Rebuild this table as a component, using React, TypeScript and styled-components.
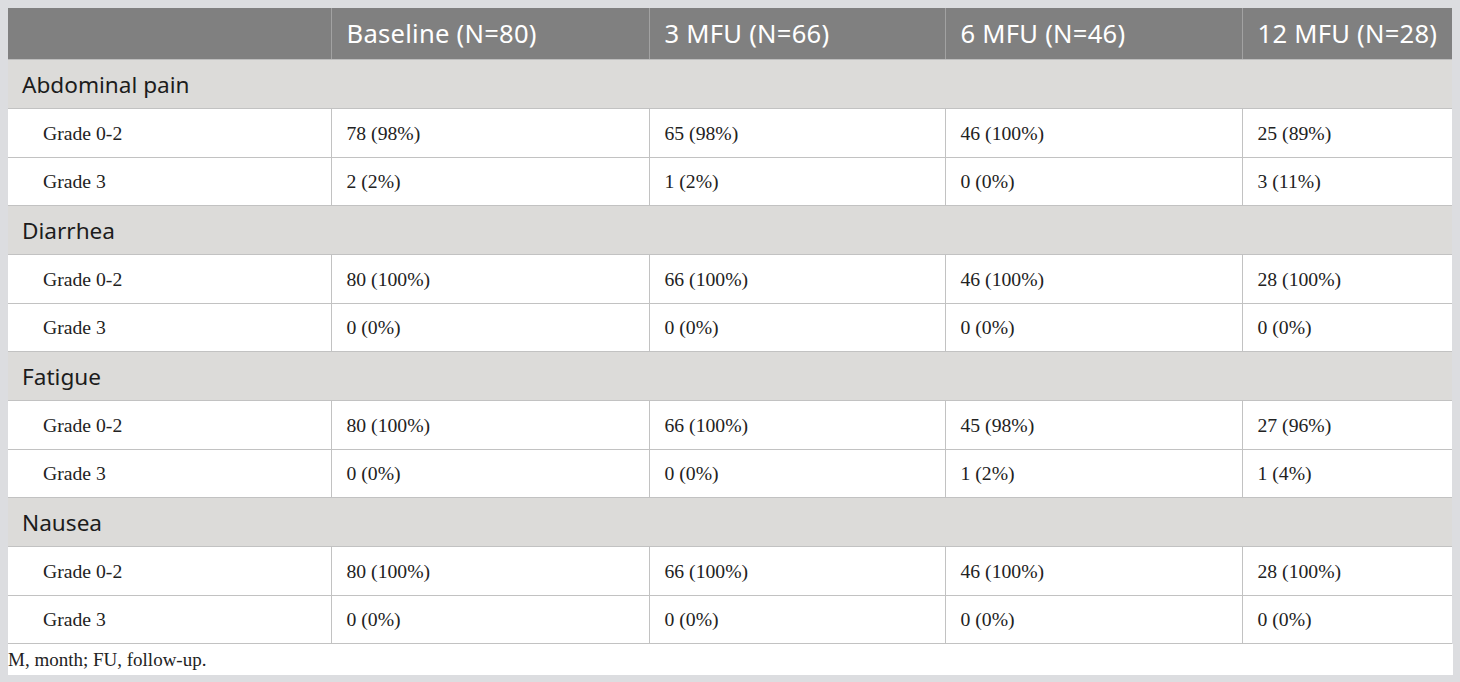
import React from "react";
import styled, { createGlobalStyle } from "styled-components";

const Global = createGlobalStyle`
  html, body { margin: 0; padding: 0; }
  body {
    background: #dcdde0;
    padding: 8px;
    width: 1444px;
    box-sizing: content-box;
  }
`;

const Wrap = styled.div`
  display: flex;
  flex-direction: column;
  width: 1444px;
`;

const Table = styled.table`
  border-collapse: collapse;
  table-layout: fixed;
  width: 1444px;
  background: #ffffff;
`;

const HeadCell = styled.th`
  background: #808080;
  color: #ffffff;
  font-family: "Noto Sans", "Open Sans", sans-serif;
  font-weight: 400;
  font-size: 25.6px;
  letter-spacing: 0.25px;
  text-align: left;
  height: 51px;
  padding: 0 0 0 15px;
  border-left: 1px solid #a2a2a2;
  border-bottom: 1px solid #bdbdbd;
  white-space: nowrap;
  &:first-child { border-left: none; }
`;

const GroupCell = styled.td`
  background: #dcdbd9;
  color: #1c1c1c;
  font-family: "Noto Sans", "Open Sans", sans-serif;
  font-size: 22.6px;
  height: 48px;
  padding: 0 0 0 14px;
  border-bottom: 1px solid #c2c2c2;
`;

const DataCell = styled.td<{ $indent?: boolean; $h: number }>`
  font-family: "Liberation Serif", "Times New Roman", serif;
  font-size: 19.7px;
  color: #222222;
  height: ${(p) => p.$h}px;
  padding: 0 0 0 ${(p) => (p.$indent ? "35px" : "15px")};
  border-bottom: 1px solid #c2c2c2;
  border-left: 1px solid #c2c2c2;
  white-space: nowrap;
  &:first-child { border-left: none; }
`;

const Footer = styled.div`
  background: #ffffff;
  font-family: "Liberation Serif", "Times New Roman", serif;
  font-size: 19px;
  color: #222222;
  height: 31px;
  line-height: 31px;
  width: 1445px;
`;

const cols = [323, 318, 296, 297, 210];
const headers = ["", "Baseline (N=80)", "3 MFU (N=66)", "6 MFU (N=46)", "12 MFU (N=28)"];

type Group = { name: string; rows: { label: string; values: string[] }[] };

const groups: Group[] = [
  {
    name: "Abdominal pain",
    rows: [
      { label: "Grade 0-2", values: ["78 (98%)", "65 (98%)", "46 (100%)", "25 (89%)"] },
      { label: "Grade 3", values: ["2 (2%)", "1 (2%)", "0 (0%)", "3 (11%)"] },
    ],
  },
  {
    name: "Diarrhea",
    rows: [
      { label: "Grade 0-2", values: ["80 (100%)", "66 (100%)", "46 (100%)", "28 (100%)"] },
      { label: "Grade 3", values: ["0 (0%)", "0 (0%)", "0 (0%)", "0 (0%)"] },
    ],
  },
  {
    name: "Fatigue",
    rows: [
      { label: "Grade 0-2", values: ["80 (100%)", "66 (100%)", "45 (98%)", "27 (96%)"] },
      { label: "Grade 3", values: ["0 (0%)", "0 (0%)", "1 (2%)", "1 (4%)"] },
    ],
  },
  {
    name: "Nausea",
    rows: [
      { label: "Grade 0-2", values: ["80 (100%)", "66 (100%)", "46 (100%)", "28 (100%)"] },
      { label: "Grade 3", values: ["0 (0%)", "0 (0%)", "0 (0%)", "0 (0%)"] },
    ],
  },
];

export default function App() {
  return (
    <>
      <Global />
      <Wrap>
        <Table>
          <colgroup>
            {cols.map((w, i) => (
              <col key={i} style={{ width: w }} />
            ))}
          </colgroup>
          <thead>
            <tr>
              {headers.map((h, i) => (
                <HeadCell key={i}>{h}</HeadCell>
              ))}
            </tr>
          </thead>
          <tbody>
            {groups.map((g) => (
              <React.Fragment key={g.name}>
                <tr>
                  <GroupCell colSpan={5}>{g.name}</GroupCell>
                </tr>
                {g.rows.map((r, ri) => (
                  <tr key={r.label}>
                    <DataCell $indent $h={ri === 0 ? 48 : 47}>
                      {r.label}
                    </DataCell>
                    {r.values.map((v, i) => (
                      <DataCell key={i} $h={ri === 0 ? 48 : 47}>
                        {v}
                      </DataCell>
                    ))}
                  </tr>
                ))}
              </React.Fragment>
            ))}
          </tbody>
        </Table>
        <Footer>M, month; FU, follow-up.</Footer>
      </Wrap>
    </>
  );
}
